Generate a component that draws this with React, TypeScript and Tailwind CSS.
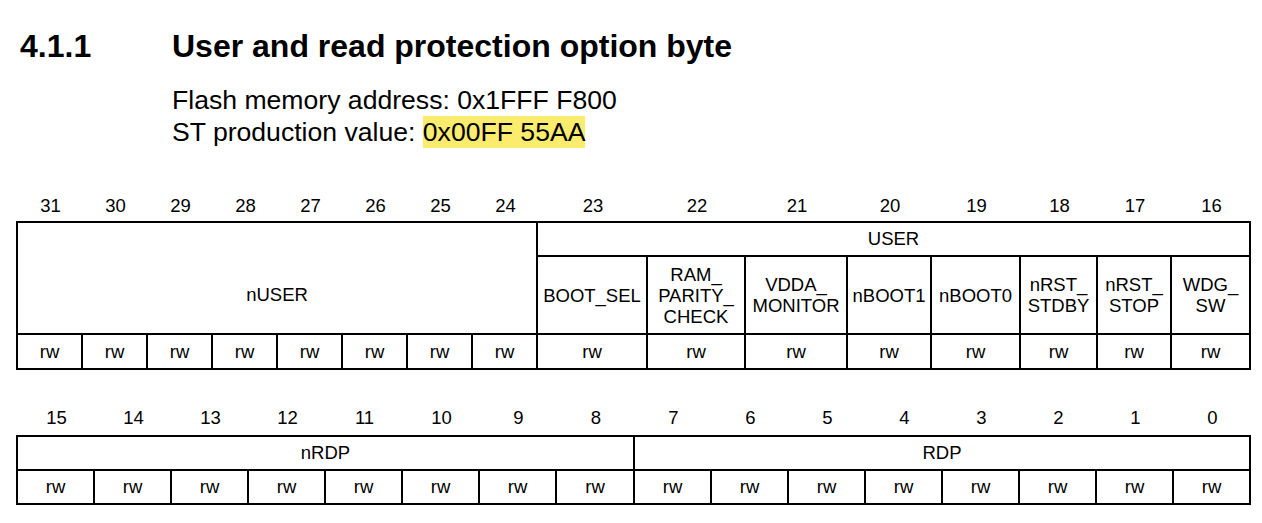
const topCols = [
  { bit: 31 }, { bit: 30 }, { bit: 29 }, { bit: 28 }, { bit: 27 }, { bit: 26 }, { bit: 25 }, { bit: 24 },
  { bit: 23, name: ['BOOT_SEL'] },
  { bit: 22, name: ['RAM_', 'PARITY_', 'CHECK'] },
  { bit: 21, name: ['VDDA_', 'MONITOR'] },
  { bit: 20, name: ['nBOOT1'] },
  { bit: 19, name: ['nBOOT0'] },
  { bit: 18, name: ['nRST_', 'STDBY'] },
  { bit: 17, name: ['nRST_', 'STOP'] },
  { bit: 16, name: ['WDG_', 'SW'] },
];

const bottomBits = [15, 14, 13, 12, 11, 10, 9, 8, 7, 6, 5, 4, 3, 2, 1, 0];

const topGrid = 'grid-cols-[65px_65px_65px_65px_65px_65px_65px_65px_110px_98px_102px_84px_89px_77px_74px_79px]';
const bottomGrid = 'grid-cols-[77px_77px_77px_77px_77px_77px_77px_78px_77px_77px_77px_77px_77px_77px_77px_77px]';

const cell = 'border-r-2 border-b-2 border-black flex items-center justify-center text-center';

export default function App() {
  return (
    <div className="w-[1262px] h-[523px] bg-white text-black font-['Liberation_Sans',Arial,sans-serif] overflow-hidden">
      {/* heading */}
      <div className="flex items-baseline pt-[26px] pl-[20px] text-[32px] leading-[40px] font-bold">
        <span className="w-[152px]">4.1.1</span>
        <span>User and read protection option byte</span>
      </div>

      <div className="pl-[172px] mt-[18px] text-[26.6px] leading-[32px]">
        <p>Flash memory address: 0x1FFF F800</p>
        <p>
          ST production value:{' '}
          <span className="bg-[#fcec6e] inline-block">0x00FF 55AA</span>
        </p>
      </div>

      {/* bits 31..16 */}
      <div className="mt-[42px] text-[18.5px]">
        <div className={`grid ${topGrid} ml-[18px] h-[31px]`}>
          {topCols.map((c) => (
            <div key={c.bit} className="flex items-center justify-center">{c.bit}</div>
          ))}
        </div>
        <div className={`grid ${topGrid} grid-rows-[34px_78px_35px] ml-[16px] w-fit border-l-2 border-t-2 border-black`}>
          <div className={`${cell} col-span-8 row-span-2 pt-[34px]`}>nUSER</div>
          <div className={`${cell} col-span-8`}>USER</div>
          {topCols.slice(8).map((c) => (
            <div key={c.bit} className={`${cell} flex-col leading-[21px]`}>
              {c.name!.map((l, i) => (
                <span key={i}>{l}</span>
              ))}
            </div>
          ))}
          {topCols.map((c) => (
            <div key={c.bit} className={cell}>rw</div>
          ))}
        </div>
      </div>

      {/* bits 15..0 */}
      <div className="mt-[31px] text-[18.5px]">
        <div className={`grid ${bottomGrid} ml-[18px] h-[34px]`}>
          {bottomBits.map((b) => (
            <div key={b} className="flex items-center justify-center">{b}</div>
          ))}
        </div>
        <div className={`grid ${bottomGrid} grid-rows-[34px_34px] ml-[16px] w-fit border-l-2 border-t-2 border-black`}>
          <div className={`${cell} col-span-8`}>nRDP</div>
          <div className={`${cell} col-span-8`}>RDP</div>
          {bottomBits.map((b) => (
            <div key={b} className={cell}>rw</div>
          ))}
        </div>
      </div>
    </div>
  );
}
